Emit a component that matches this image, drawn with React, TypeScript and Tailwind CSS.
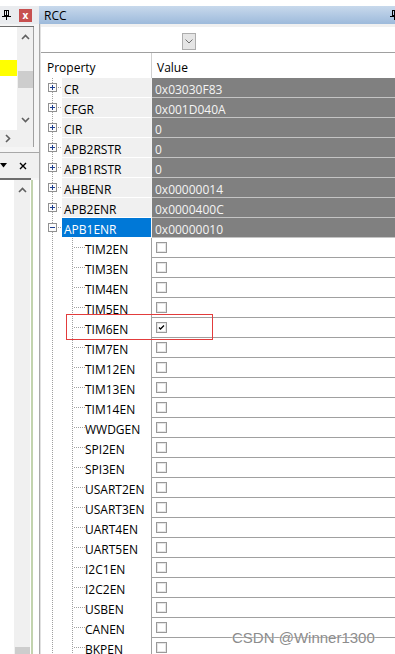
import React from "react";

const topRows: [string, string][] = [
  ["CR", "0x03030F83"],
  ["CFGR", "0x001D040A"],
  ["CIR", "0"],
  ["APB2RSTR", "0"],
  ["APB1RSTR", "0"],
  ["AHBENR", "0x00000014"],
  ["APB2ENR", "0x0000400C"],
  ["APB1ENR", "0x00000010"],
];

const kids = [
  "TIM2EN", "TIM3EN", "TIM4EN", "TIM5EN", "TIM6EN", "TIM7EN", "TIM12EN", "TIM13EN", "TIM14EN",
  "WWDGEN", "SPI2EN", "SPI3EN", "USART2EN", "USART3EN", "UART4EN", "UART5EN", "I2C1EN", "I2C2EN",
  "USBEN", "CANEN", "BKPEN",
];

function TopGutter({ expanded }: { expanded: boolean }) {
  return (
    <svg width="21" height="20" className="block shrink-0">
      <line x1="11.5" y1="0" x2="11.5" y2="20" stroke="#a0a0a0" strokeDasharray="1 1" />
      <line x1="17" y1="9.5" x2="21" y2="9.5" stroke="#a0a0a0" strokeDasharray="1 1" />
      <rect x="7.5" y="5.5" width="8" height="8" fill="#fcfcfc" stroke="#919191" />
      <line x1="9" y1="9.5" x2="14" y2="9.5" stroke="#1d3e8e" />
      {!expanded && <line x1="11.5" y1="7" x2="11.5" y2="12" stroke="#1d3e8e" />}
    </svg>
  );
}

function KidGutter() {
  return (
    <svg width="44" height="20" className="block shrink-0">
      <line x1="11.5" y1="0" x2="11.5" y2="20" stroke="#a0a0a0" strokeDasharray="1 1" />
      <line x1="31.5" y1="0" x2="31.5" y2="20" stroke="#a0a0a0" strokeDasharray="1 1" />
      <line x1="33" y1="9.5" x2="44" y2="9.5" stroke="#a0a0a0" strokeDasharray="1 1" />
    </svg>
  );
}

function Checkbox({ checked }: { checked: boolean }) {
  return (
    <svg width="11" height="11" className="block">
      <rect x="0.5" y="0.5" width="10" height="10" fill="#fff" stroke="#9a9a9a" />
      <rect x="1.5" y="1.5" width="8" height="8" fill="none" stroke="#e6e6e6" />
      {checked && <path d="M3 5.5 L4.5 7 L8 3.5" fill="none" stroke="#000" strokeWidth="1.3" />}
    </svg>
  );
}

function Pin() {
  return (
    <svg width="9" height="10" className="block">
      <rect x="2.5" y="0.5" width="4" height="5" fill="none" stroke="#000" />
      <rect x="4" y="1" width="1" height="4" fill="#000" />
      <line x1="0" y1="6.5" x2="9" y2="6.5" stroke="#000" />
      <line x1="4.5" y1="7" x2="4.5" y2="10" stroke="#000" />
    </svg>
  );
}

function UpArrow() {
  return (
    <svg width="9" height="6" className="block">
      <path d="M1 5 L4.5 1.5 L8 5" fill="none" stroke="#606060" strokeWidth="1.6" />
    </svg>
  );
}
function DownArrow() {
  return (
    <svg width="9" height="6" className="block">
      <path d="M1 1 L4.5 4.5 L8 1" fill="none" stroke="#606060" strokeWidth="1.6" />
    </svg>
  );
}

export default function App() {
  return (
    <div className="relative w-[395px] h-[654px] overflow-hidden bg-white font-['Open_Sans','Noto_Sans',sans-serif] text-[12px] text-black">
      <div className="h-[6px] bg-white" />
      <div className="flex h-[648px]">
        {/* Left docked panels */}
        <div className="w-[39px] shrink-0 flex flex-col bg-[#f5f5f5]">
          <div className="h-[18px] bg-[#eaecef] flex items-center">
            <div className="ml-[2px]">
              <Pin />
            </div>
            <div className="ml-[8px] w-[13px] h-[13px] bg-[#c75050] flex items-center justify-center text-white text-[10px] leading-none font-bold">
              x
            </div>
          </div>
          <div className="h-[2px] bg-[#f5f5f5]" />
          <div className="h-px w-[34px] bg-[#6e6e6e]" />
          <div className="h-[103px] flex">
            <div className="w-[17px] bg-white flex flex-col">
              <div className="h-[33px]" />
              <div className="h-[16px] bg-[#ffff00]" />
            </div>
            <div className="w-[16px] bg-[#f0f0f0] flex flex-col items-center">
              <div className="mt-[7px]">
                <UpArrow />
              </div>
              <div className="mt-[31px] w-[15px] h-[17px] bg-[#cdcdcd]" />
              <div className="mt-[29px]">
                <DownArrow />
              </div>
            </div>
            <div className="w-px bg-[#a0a0a0]" />
          </div>
          <div className="h-[17px] w-[34px] bg-[#f0f0f0] flex items-center border-r border-[#a0a0a0]">
            <svg width="6" height="9" className="block ml-[5px]">
              <path d="M1 1 L4.5 4.5 L1 8" fill="none" stroke="#606060" strokeWidth="1.6" />
            </svg>
          </div>
          <div className="h-[5px]" />
          <div className="h-px bg-[#a8a8a8]" />
          <div className="h-[25px] bg-[#f0f0f0] flex items-center">
            <svg width="7" height="5" className="block ml-0">
              <path d="M0 0 H7 L3.5 4.5 Z" fill="#000" />
            </svg>
            <svg width="8" height="8" className="block ml-[12px]">
              <path d="M1 1 L7 7 M7 1 L1 7" stroke="#000" strokeWidth="1.4" />
            </svg>
          </div>
          <div className="h-[2px] w-[31px] bg-[#6d6d6d]" />
          <div className="flex-1 flex">
            <div className="w-[14px] bg-white" />
            <div className="w-[16px] bg-[#f0f0f0] flex flex-col items-center justify-between">
              <div className="mt-[7px]">
                <UpArrow />
              </div>
              <div className="w-[15px] h-[7px] bg-[#cdcdcd]" />
            </div>
            <div className="w-px bg-white" />
            <div className="w-[2px] bg-[#c2d3ae]" />
            <div className="flex-1 bg-white" />
          </div>
        </div>

        {/* RCC panel */}
        <div className="flex-1 flex flex-col">
          <div className="h-[18px] bg-gradient-to-b from-[#c8d9ec] to-[#9dbadb] flex items-center justify-between">
            <span className="ml-[5px] pt-px">RCC</span>
            <div className="mr-[-4px]">
              <Pin />
            </div>
          </div>
          <div className="h-px bg-[#dfe3e8]" />
          <div className="h-px bg-[#a8a8a8]" />
          <div className="flex-1 flex">
            <div className="w-px bg-[#a9a9a9]" />
            <div className="w-px bg-[#e0e0e0]" />
            <div className="flex-1 flex flex-col">
              <div className="h-[3px] bg-[#f0f0f0]" />
              <div className="h-[25px] bg-white pl-[141px] pt-[6px]">
                <div className="w-[14px] h-[17px] bg-[#e5e5e5] border border-[#adadad] flex items-center justify-center">
                  <svg width="8" height="5" className="block">
                    <path d="M0.5 0.5 L4 4 L7.5 0.5" fill="none" stroke="#707070" />
                  </svg>
                </div>
              </div>
              <div className="h-px bg-[#a0a0a0]" />
              <div className="h-[25px] flex items-center">
                <div className="w-[110px] h-full pl-[6px] pt-[4px] flex items-center">Property</div>
                <div className="w-px h-full bg-[#d0d0d0]" />
                <div className="h-full pl-[5px] pt-[4px] flex items-center">Value</div>
              </div>
              {topRows.map(([name, value], i) => {
                const expanded = i === topRows.length - 1;
                return (
                  <div key={name} className="flex h-[20px]">
                    <TopGutter expanded={expanded} />
                    <div
                      className={
                        expanded
                          ? "w-[89px] h-[20px] border-b border-white bg-[#0078d7] text-white pl-[2px] pt-[4px] flex items-center"
                          : "w-[89px] h-[20px] border-b border-white bg-[#f0f0f0] pl-[2px] pt-[4px] flex items-center"
                      }
                    >
                      {name}
                    </div>
                    <div className="w-px bg-[#f4f4f4]" />
                    <div className="flex-1 h-[20px] border-b border-[#c4c4c4] bg-[#808080] text-[#f4f4f4] pl-[3px] pt-[4px] flex items-center">
                      {value}
                    </div>
                  </div>
                );
              })}
              {kids.map((k) => (
                <div key={k} className="flex h-[20px] shrink-0">
                  <KidGutter />
                  <div className="w-[66px] h-[20px] pt-[4px] flex items-center">{k}</div>
                  <div className="w-px bg-[#a0a0a0]" />
                  <div className="flex-1 h-[20px] border-b border-[#a0a0a0] pl-[4px] pb-px flex items-center">
                    <Checkbox checked={k === "TIM6EN"} />
                  </div>
                </div>
              ))}
            </div>
          </div>
        </div>
      </div>

      {/* highlight annotation */}
      <div className="absolute left-[66px] top-[314px] w-[147px] h-[26px] border border-[#e23c3c]" />

      {/* watermark */}
      <div className="absolute left-[232px] top-[628px] text-[15px] leading-[20px] text-[#8c8c8c] font-['Liberation_Sans',sans-serif] [text-shadow:0_0_2px_#ffffff]">
        CSDN @Winner1300
      </div>
    </div>
  );
}
